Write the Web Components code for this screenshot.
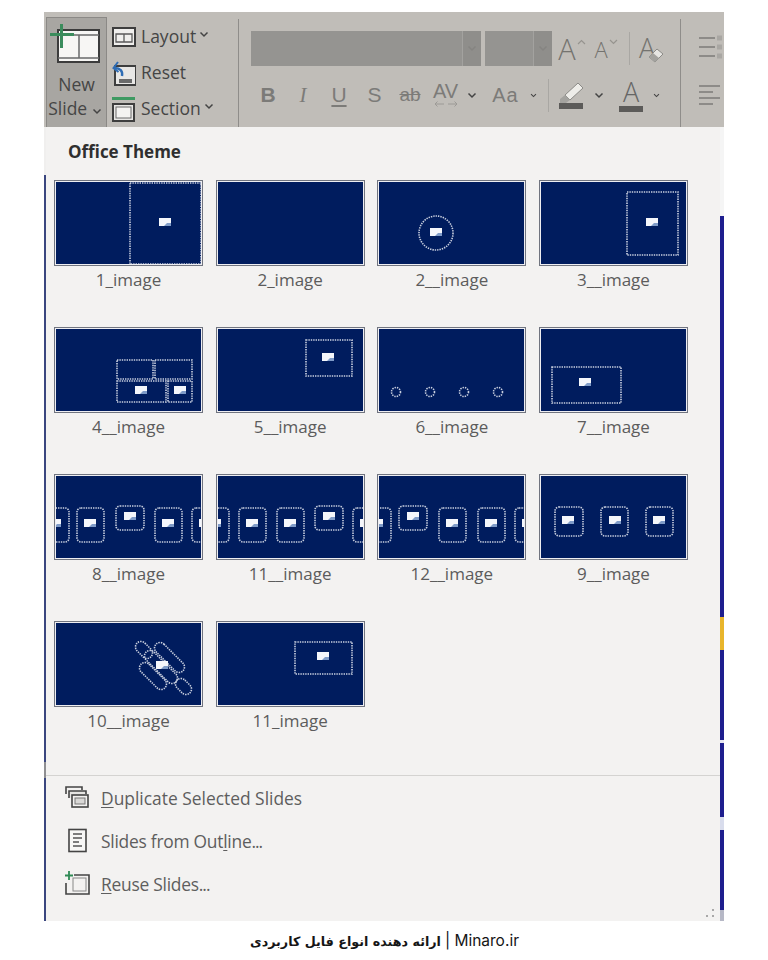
<!DOCTYPE html>
<html>
<head>
<meta charset="utf-8">
<title>New Slide</title>
<style>
    html, body { margin: 0; background: #fff; }
    body { font-family: "Open Sans", "Liberation Sans", sans-serif; }
</style>
</head>
<body>
<slide-shot></slide-shot>

<script>
const chev = (c = '#444') => `<svg width="10" height="7" viewBox="0 0 10 7"><path d="M1.5 1.5 5 5l3.5-3.5" fill="none" stroke="${c}" stroke-width="1.5"/></svg>`;

// ribbon part for the left side: new slide + layout / reset / section
customElements.define('ribbon-slides', class extends HTMLElement {
    constructor() {
        super();
        this.attachShadow({mode: 'open'}).innerHTML = `
        <style>
            :host { display: flex; height: 115px; font-size: 17.5px; color: #454545; }
            .new {
                box-sizing: border-box; width: 61px; height: 110px; margin: 5px 0 0 2px;
                background: #a8a6a2; border: 1px solid #8b8986; border-bottom: 0;
                display: flex; flex-direction: column; align-items: center;
                line-height: 24px;
            }
            .new svg.big { margin: 5px 0 5px; }
            .col { margin-left: 5px; padding-top: 6px; width: 126px; }
            .row { display: flex; align-items: center; height: 36px; gap: 5px; }
            .row svg.ic { width: 24px; height: 28px; flex: none; margin-top: 2px; }
            .row svg.ch { margin-left: -2px; margin-top: -3px; }
            .slide { white-space: nowrap; margin-left: -3px; }
            .slide svg { margin-left: 0; }
        </style>
        <div class="new">
            <svg class="big" width="54" height="44" viewBox="0 0 54 44">
                <rect x="8" y="7" width="41" height="32" fill="#f7f6f4" stroke="#3c3c3c" stroke-width="2"/>
                <path d="M8 12H49M29 12V35M8 35H49" stroke="#6a6a6a" fill="none" stroke-width="1.5"/>
                <rect x="10" y="1" width="3" height="24" fill="#3b8c5c"/>
                <rect x="0" y="10" width="24" height="3" fill="#3b8c5c"/>
            </svg>
            <div>New</div>
            <div class="slide">Slide ${chev()}</div>
        </div>
        <div class="col">
            <div class="row">
                <svg class="ic" viewBox="0 0 24 28"><rect x="1" y="5" width="22" height="18" fill="#f0efed" stroke="#3e3e3e" stroke-width="2"/><path d="M4 11H20V19H4ZM12 11V19" fill="none" stroke="#5a5a5a" stroke-width="1.3"/></svg>
                <span>Layout</span><svg class="ch" width="10" height="7" viewBox="0 0 10 7"><path d="M1.5 1.5 5 5l3.5-3.5" fill="none" stroke="#444" stroke-width="1.5"/></svg>
            </div>
            <div class="row">
                <svg class="ic" viewBox="0 0 24 28"><rect x="3" y="7" width="21" height="19" fill="#e8e7e5" stroke="#3e3e3e" stroke-width="2"/><path d="M7 20H20V24H7Z" fill="#6a6a6a"/><path d="M10 17C11 12 8 9 3 9" fill="none" stroke="#2f6db5" stroke-width="2.4"/><path d="M6 3 1.5 9l5 4" fill="none" stroke="#2f6db5" stroke-width="2"/></svg>
                <span>Reset</span>
            </div>
            <div class="row">
                <svg class="ic" viewBox="0 0 24 28"><rect x="0" y="2" width="23" height="3" fill="#3f9a62"/><rect x="1" y="9" width="21" height="17" fill="#e8e7e5" stroke="#3e3e3e" stroke-width="2"/><rect x="4" y="12" width="15" height="11" fill="#f4f3f1" stroke="#6a6a6a"/></svg>
                <span>Section</span><svg class="ch" width="10" height="7" viewBox="0 0 10 7"><path d="M1.5 1.5 5 5l3.5-3.5" fill="none" stroke="#444" stroke-width="1.5"/></svg>
            </div>
        </div>`;
    }
});

// greyed out font controls of the ribbon
customElements.define('ribbon-font', class extends HTMLElement {
    constructor() {
        super();
        this.attachShadow({mode: 'open'}).innerHTML = `
        <style>
            :host { display: block; width: 429px; height: 115px; margin-left: 12px; color: #7c7b78; }
            .top { display: flex; height: 35px; margin-top: 19px; align-items: center; }
            .box { height: 35px; background: #959491; display: flex; justify-content: flex-end; box-sizing: border-box; }
            .box i { width: 18px; border-left: 1px solid #a3a29f; background: #8f8e8b; display: flex; align-items: center; justify-content: center; }
            .bottom { display: flex; height: 40px; margin-top: 9px; align-items: center; }
            .c { display: flex; align-items: center; justify-content: center; flex: none; height: 40px; }
            .l { font-size: 21px; font-family: "Liberation Sans", sans-serif; }
            .sep { width: 1px; background: #a9a7a3; flex: none; }
            .big { font-family: "Open Sans", sans-serif; font-weight: 300; color: #74736f; }
        </style>
        <div class="top">
            <div class="box" style="width:230px"><i>${chev('#858481')}</i></div>
            <div class="box" style="width:67px;margin-left:4px"><i>${chev('#858481')}</i></div>
            <div class="c" style="width:40px">
                <span class="big" style="font-size:29px">A</span>
                <svg width="9" height="6" style="margin:-14px 0 0 1px" viewBox="0 0 9 6"><path d="M1 5 4.5 1.5 8 5" fill="none" stroke="#96948f" stroke-width="1.2"/></svg>
            </div>
            <div class="c" style="width:28px">
                <span class="big" style="font-size:22px">A</span>
                <svg width="9" height="6" style="margin:-14px 0 0 1px" viewBox="0 0 9 6"><path d="M1 1 4.5 4.5 8 1" fill="none" stroke="#96948f" stroke-width="1.2"/></svg>
            </div>
            <div class="sep" style="height:33px;margin-left:9px"></div>
            <div class="c" style="width:32px;margin-left:4px;position:relative">
                <span class="big" style="font-size:27px;margin:-3px 6px 0 0">A</span>
                <svg width="16" height="16" style="position:absolute;right:2px;bottom:6px" viewBox="0 0 16 16"><path d="M1 10 9 2l6 5-8 8Z" fill="#e6e5e2" stroke="#8b8a86"/><path d="M1 10 5 6l6 5-4 4Z" fill="#a3a29e"/></svg>
            </div>
        </div>
        <div class="bottom">
            <div class="c l" style="width:34px;font-weight:bold">B</div>
            <div class="c l" style="width:36px;font-family:'Liberation Serif',serif;font-style:italic">I</div>
            <div class="c l" style="width:36px;text-decoration:underline;text-underline-offset:3px">U</div>
            <div class="c l" style="width:35px">S</div>
            <div class="c l" style="width:36px;text-decoration:line-through;font-size:19px">ab</div>
            <div class="c" style="width:35px;flex-direction:column;line-height:17px;font-size:20px">
                <span style="font-family:'Liberation Sans',sans-serif">AV</span>
                <svg width="24" height="8" viewBox="0 0 24 8"><path d="M1 4H10M3.5 1.5 1 4l2.500 2.500M14 4H23M20.500 1.500 23 4l-2.500 2.500" fill="none" stroke="#9c9a96"/></svg>
            </div>
            <div class="c" style="width:18px">${chev()}</div>
            <div class="c l" style="width:49px;font-size:20px;letter-spacing:1px">Aa</div>
            <div class="c" style="width:7px">${chev()}</div>
            <div class="sep" style="height:33px;margin-left:11px"></div>
            <div class="c" style="width:44px">
                <svg width="26" height="30" viewBox="0 0 26 30"><path d="M7 15 20 3l5 5-13 12Z" fill="#eeede9" stroke="#8b8a86"/><path d="M2 19l5-4 5 5-4 3H2Z" fill="#a3a29e"/><rect x="1" y="23" width="24" height="6" fill="#5c5b59"/></svg>
            </div>
            <div class="c" style="width:11px">${chev()}</div>
            <div class="c" style="width:44px;margin-left:5px;position:relative;flex-direction:column">
                <span class="big" style="font-size:27px;line-height:26px;height:27px;color:#666">A</span>
                <div style="width:24px;height:6px;background:#5c5b59"></div>
            </div>
            <div class="c" style="width:7px">${chev()}</div>
        </div>`;
    }
});

// paragraph icons, cut off by the edge of the picture
customElements.define('ribbon-para', class extends HTMLElement {
    constructor() {
        super();
        this.attachShadow({mode: 'open'}).innerHTML = `
        <style>
            :host { display: block; width: 43px; height: 115px; overflow: hidden; }
            svg { display: block; margin-left: 17px; }
        </style>
        <svg width="26" height="100" viewBox="0 0 26 100" style="margin-top:15px">
            <path d="M1 11H17M1 20H17M1 29H17" stroke="#8d8b88" stroke-width="2"/>
            <path d="M19 8.500H24V13.500H19ZM19 17.500H24V22.500H19ZM19 26.500H24V31.500H19Z" fill="#a9a7a3"/>
            <path d="M1 59H22M1 65H15M1 71H22M1 77H15" stroke="#8d8b88" stroke-width="2"/>
        </svg>`;
    }
});

customElements.define('ppt-ribbon', class extends HTMLElement {
    constructor() {
        super();
        this.attachShadow({mode: 'open'}).innerHTML = `
        <style>
            :host { display: flex; height: 115px; background: #c0bdb8; }
            .div { width: 1px; height: 108px; margin-top: 7px; background: #8f8d8a; flex: none; }
        </style>
        <ribbon-slides></ribbon-slides>
        <div class="div"></div>
        <ribbon-font></ribbon-font>
        <div class="div"></div>
        <ribbon-para></ribbon-para>`;
    }
});

// what sits on each thumbnail, in thumbnail coordinates (149 x 86)
const r = (x1, y1, x2, y2, rx = 0) => `<rect x="${x1}" y="${y1}" width="${x2 - x1}" height="${y2 - y1}" rx="${rx}" class="d"/>`;
const p = (x, y) => `<g transform="translate(${x - 6} ${y - 4})"><rect width="12" height="8" fill="#f4f6fb"/><path d="M5 8 8 5h4v3Z" fill="#7f9bc8"/></g>`;
const o = (x, y, rad) => `<circle cx="${x}" cy="${y}" r="${rad}" class="d"/>`;
const cap = (x1, y1, x2, y2, w = 11) => {
    const len = Math.hypot(x2 - x1, y2 - y1), a = Math.atan2(y2 - y1, x2 - x1) * 180 / Math.PI;
    return `<rect x="${-w / 2}" y="${-w / 2}" width="${len + w}" height="${w}" rx="${w / 2}" class="d" transform="translate(${x1} ${y1}) rotate(${a})"/>`;
};
const tall = (x, y = 34) => r(x, y, x + 27, y + 34, 4) + p(x + 13, y + 15);
const wide = x => r(x, 32, x + 28, 56, 4) + p(x + 14, 42);

const ART = {
    a: r(76, 3, 147, 84) + p(111, 42),
    b: '',
    c: o(59, 53, 17) + p(59, 52),
    d: r(88, 12, 139, 75) + p(113, 42),
    e: r(63, 33, 99, 52) + r(101, 33, 138, 52) + r(63, 54, 112, 75) + r(114, 54, 138, 75) + p(87, 63) + p(126, 63),
    f: r(90, 13, 136, 49) + p(112, 30),
    g: o(19, 65, 4.5) + o(53, 65, 4.5) + o(87, 65, 4.5) + o(121, 65, 4.5),
    h: r(13, 40, 82, 76) + p(46, 55),
    i: tall(-12) + tall(23) + wide(62) + tall(101) + tall(138),
    j: tall(-14) + tall(23) + tall(61) + wide(99) + tall(137),
    k: tall(-13) + wide(22) + tall(62) + tall(101) + tall(138),
    l: r(16, 33, 44, 62, 4) + r(62, 33, 89, 62, 4) + r(107, 33, 134, 62, 4) + p(29, 46) + p(76, 46) + p(120, 46),
    m: cap(87, 26, 93, 32) + cap(106, 27, 125, 46) + cap(96, 35, 118, 57) + cap(91, 47, 107, 63)
        + cap(127, 63, 132, 68) + p(108, 44),
    n: r(79, 21, 136, 53) + p(107, 35)
};

customElements.define('layout-thumb', class extends HTMLElement {
    constructor() {
        super();
        const art = ART[this.getAttribute('art')] || '';
        this.attachShadow({mode: 'open'}).innerHTML = `
        <style>
            :host { display: block; width: 149px; font-size: 17px; color: #5c5c5c; text-align: center; }
            .t { box-sizing: border-box; width: 149px; height: 86px; border: 1px solid #70747f; background: #eeeef2; padding: 1px; }
            svg { display: block; background: #001c5e; filter: blur(.3px); }
            .d { fill: none; stroke: #c8cfdf; stroke-width: 1.6; stroke-dasharray: 1.4 1; }
            .lab { line-height: 24px; margin-top: 2px; }
        </style>
        <div class="t"><svg width="145" height="82" viewBox="2 2 145 82">${art}</svg></div>
        <div class="lab"><slot></slot></div>`;
    }
});

customElements.define('layout-gallery', class extends HTMLElement {
    constructor() {
        super();
        this.attachShadow({mode: 'open'}).innerHTML = `
        <style>
            :host {
                display: grid; grid-template-columns: repeat(4, 149px); grid-auto-rows: 147px;
                column-gap: 12.67px; padding-left: 8px; height: 588px;
            }
        </style>
        <slot></slot>`;
    }
});

customElements.define('menu-item', class extends HTMLElement {
    constructor() {
        super();
        this.attachShadow({mode: 'open'}).innerHTML = `
        <style>
            :host { display: flex; align-items: center; height: 43px; font-size: 17.4px; color: #5e5e5e; }
            .i { width: 26px; height: 26px; margin: 0 11px 0 18px; flex: none; }
            ::slotted(u) { text-underline-offset: 2px; }
        </style>
        <div class="i"><slot name="icon"></slot></div>
        <span><slot></slot></span>`;
    }
});

customElements.define('new-slide-panel', class extends HTMLElement {
    constructor() {
        super();
        this.attachShadow({mode: 'open'}).innerHTML = `
        <style>
            :host { display: block; flex: 1; position: relative; background: #f3f2f1; }
            h2 { margin: 0; padding: 13px 0 16px 22px; font-size: 17px; line-height: 24px; font-weight: bold; color: #2f2f2f; }
            hr { margin: 7px 0 0; border: 0; border-top: 1px solid #d4d3d1; }
            .grip { position: absolute; right: 5px; bottom: 3px; }
        </style>
        <h2>Office Theme</h2>
        <slot name="gallery"></slot>
        <hr>
        <div><slot></slot></div>
        <svg class="grip" width="10" height="10" viewBox="0 0 10 10"><path d="M7 1h2v2H7ZM1 7h2v2H1ZM7 7h2v2H7Z" fill="#a8a8a8"/></svg>`;
    }
});

customElements.define('site-footer', class extends HTMLElement {
    constructor() {
        super();
        this.attachShadow({mode: 'open'}).innerHTML = `
        <style>
            :host {
                display: flex; align-items: center; justify-content: center; box-sizing: border-box; height: 39px; padding: 0 0 2px 1px;
                color: #151515;
            }
            span { font-family: "DejaVu Sans", sans-serif; font-size: 12.7px; font-weight: bold; }
            b { font: 400 15.5px "Inter", "Liberation Sans", sans-serif; }
        </style>
        <div dir="rtl"><b>Minaro.ir</b> <b>|</b> <span>ارائه دهنده انواع فایل کاربردی</span></div>`;
    }
});

customElements.define('slide-shot', class extends HTMLElement {
    constructor() {
        super();
        this.attachShadow({mode: 'open'}).innerHTML = `
        <style>
            :host { display: block; width: 680px; margin: 12px 0 0 44px; }
            .body { display: flex; height: 794px; }
            .left { width: 2px; background: linear-gradient(#f0efee 0 6%, #3a467f 6% 80%, #8f8f92 80% 82%, #3a467f 82%); }
            .right {
                width: 4px;
                background: linear-gradient(#f5f5f5 0 89px, #1e1e8e 89px 490px, #e8b52c 490px 523px, #1e1e8e 523px 613px, #e6e6f0 613px 616px,
                    #1e1e8e 616px 690px, #d8dcec 690px 703px, #1e1e8e 703px 783px, #b6b8c6 783px);
            }
        </style>
        <ppt-ribbon></ppt-ribbon>
        <div class="body">
            <div class="left"></div>
            <new-slide-panel>
                <layout-gallery slot="gallery">
                    <layout-thumb art="a">1_image</layout-thumb>
                    <layout-thumb art="b">2_image</layout-thumb>
                    <layout-thumb art="c">2__image</layout-thumb>
                    <layout-thumb art="d">3__image</layout-thumb>
                    <layout-thumb art="e">4__image</layout-thumb>
                    <layout-thumb art="f">5__image</layout-thumb>
                    <layout-thumb art="g">6__image</layout-thumb>
                    <layout-thumb art="h">7__image</layout-thumb>
                    <layout-thumb art="i">8__image</layout-thumb>
                    <layout-thumb art="j">11__image</layout-thumb>
                    <layout-thumb art="k">12__image</layout-thumb>
                    <layout-thumb art="l">9__image</layout-thumb>
                    <layout-thumb art="m">10__image</layout-thumb>
                    <layout-thumb art="n">11_image</layout-thumb>
                </layout-gallery>
                <menu-item>
                    <svg slot="icon" width="26" height="26" viewBox="0 0 26 26"><path d="M2 9V2H18V5" fill="none" stroke="#444" stroke-width="1.6"/><path d="M5 13V6H22V9" fill="#e6e5e3" stroke="#444" stroke-width="1.6"/><rect x="8" y="10" width="16" height="12" fill="#f3f2f1" stroke="#444" stroke-width="1.6"/><rect x="11" y="13" width="10" height="6" fill="#d9d8d6" stroke="#777"/></svg>
                    <u>D</u>uplicate Selected Slides
                </menu-item>
                <menu-item style="letter-spacing:-.25px">
                    <svg slot="icon" width="26" height="26" viewBox="0 0 26 26"><rect x="5" y="1.500" width="17" height="22" fill="#f7f7f6" stroke="#444" stroke-width="1.6"/><path d="M9 6H18M9 10H18M9 14H15M9 18H18" stroke="#555" stroke-width="1.4"/></svg>
                    Slides from Out<u>l</u>ine<span style="letter-spacing:-1px">...</span>
                </menu-item>
                <menu-item style="letter-spacing:-.25px">
                    <svg slot="icon" width="26" height="26" viewBox="0 0 26 26"><path d="M2 12V23H25V4H10" fill="#f3f2f1" stroke="#444" stroke-width="1.6"/><rect x="9" y="7" width="13" height="13" fill="none" stroke="#888"/><path d="M5 0V9M1 4.500H9" stroke="#2f8a55" stroke-width="1.8"/></svg>
                    <u>R</u>euse Slides<span style="letter-spacing:-1px">...</span>
                </menu-item>
            </new-slide-panel>
            <div class="right"></div>
        </div>`;
    }
});
</script>
<site-footer></site-footer>
</body>
</html>
